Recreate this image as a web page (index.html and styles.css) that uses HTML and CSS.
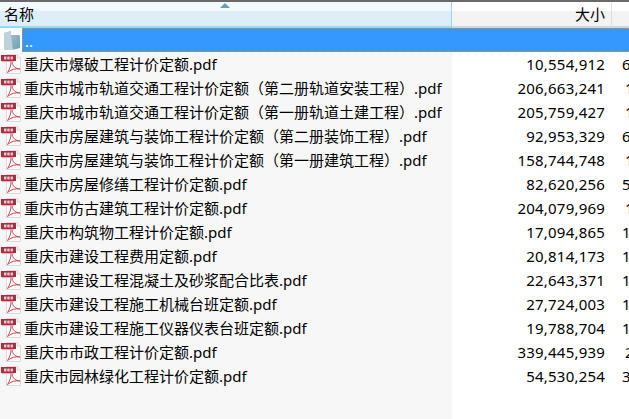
FILE: index.html
```html
<!DOCTYPE html>
<html lang="zh">
<head>
<meta charset="utf-8">
<title>文件列表</title>
<link rel="stylesheet" href="styles.css">
</head>
<body>
<svg class="defs" width="0" height="0" aria-hidden="true">
  <defs>
    <linearGradient id="fold" x1="0" y1="0" x2="1" y2="1">
      <stop offset="0" stop-color="#a9cbd8"/>
      <stop offset="1" stop-color="#6f9fb3"/>
    </linearGradient>
    <symbol id="pdf" viewBox="0 0 22 22">
      <path d="M6.5 1.5H17L20.5 5V20.5H6.5Z" fill="#fdfdfd" stroke="#dadada"/>
      <path d="M17 1.5V5H20.5" fill="#f0f0f0" stroke="#dadada"/>
      <rect x="1" y="2" width="15" height="6" fill="#ab2c40"/>
      <rect x="2" y="8" width="12" height="1" fill="#e0b0b8"/>
      <rect x="4" y="3.5" width="2.4" height="3" fill="#e8c6cc"/>
      <rect x="7.3" y="3.5" width="2.4" height="3" fill="#e8c6cc"/>
      <rect x="10.6" y="3.5" width="2.4" height="3" fill="#e8c6cc"/>
      <path d="M12 9C12.5 12.5 15 15.5 20 16C15.5 15.2 11 16.5 7.5 19.5C9.5 16.5 11 13 11 9" fill="none" stroke="#d2454e" stroke-width="1"/>
    </symbol>
  </defs>
</svg>
<div class="list">
  <div class="header">
    <div class="head-name"><span class="sort"></span><span>名称</span></div>
    <div class="head-size">大小</div>
    <div class="head-rest"></div>
  </div>
  <div class="row up">
    <svg class="folder" viewBox="0 0 18 21" width="18" height="21" aria-hidden="true">
      <path d="M1 3L8 1V5H16C17 5 17 6 17 7V18L9 20H3C2 20 1 19 1 18Z" fill="url(#fold)"/>
      <path d="M8 5L10 20H3C2 20 1 19 1 18V3L8 1Z" fill="#bcd3dc"/>
    </svg>
    <div class="up-label">..</div>
  </div>
  <div class="row"><svg class="icon"><use href="#pdf"/></svg><div class="name">重庆市爆破工程计价定额.pdf</div><div class="size">10,554,912</div><div class="rest">6</div></div>
  <div class="row"><svg class="icon"><use href="#pdf"/></svg><div class="name">重庆市城市轨道交通工程计价定额<span class="paren" lang="zh-Hant">（</span>第二册轨道安装工程<span class="paren" lang="zh-Hant">）</span>.pdf</div><div class="size">206,663,241</div><div class="rest in">1</div></div>
  <div class="row"><svg class="icon"><use href="#pdf"/></svg><div class="name">重庆市城市轨道交通工程计价定额<span class="paren" lang="zh-Hant">（</span>第一册轨道土建工程<span class="paren" lang="zh-Hant">）</span>.pdf</div><div class="size">205,759,427</div><div class="rest in">1</div></div>
  <div class="row"><svg class="icon"><use href="#pdf"/></svg><div class="name">重庆市房屋建筑与装饰工程计价定额<span class="paren" lang="zh-Hant">（</span>第二册装饰工程<span class="paren" lang="zh-Hant">）</span>.pdf</div><div class="size">92,953,329</div><div class="rest">6</div></div>
  <div class="row"><svg class="icon"><use href="#pdf"/></svg><div class="name">重庆市房屋建筑与装饰工程计价定额<span class="paren" lang="zh-Hant">（</span>第一册建筑工程<span class="paren" lang="zh-Hant">）</span>.pdf</div><div class="size">158,744,748</div><div class="rest in">1</div></div>
  <div class="row"><svg class="icon"><use href="#pdf"/></svg><div class="name">重庆市房屋修缮工程计价定额.pdf</div><div class="size">82,620,256</div><div class="rest">5</div></div>
  <div class="row"><svg class="icon"><use href="#pdf"/></svg><div class="name">重庆市仿古建筑工程计价定额.pdf</div><div class="size">204,079,969</div><div class="rest in">1</div></div>
  <div class="row"><svg class="icon"><use href="#pdf"/></svg><div class="name">重庆市构筑物工程计价定额.pdf</div><div class="size">17,094,865</div><div class="rest">1</div></div>
  <div class="row"><svg class="icon"><use href="#pdf"/></svg><div class="name">重庆市建设工程费用定额.pdf</div><div class="size">20,814,173</div><div class="rest">1</div></div>
  <div class="row"><svg class="icon"><use href="#pdf"/></svg><div class="name">重庆市建设工程混凝土及砂浆配合比表.pdf</div><div class="size">22,643,371</div><div class="rest">1</div></div>
  <div class="row"><svg class="icon"><use href="#pdf"/></svg><div class="name">重庆市建设工程施工机械台班定额.pdf</div><div class="size">27,724,003</div><div class="rest">1</div></div>
  <div class="row"><svg class="icon"><use href="#pdf"/></svg><div class="name">重庆市建设工程施工仪器仪表台班定额.pdf</div><div class="size">19,788,704</div><div class="rest">1</div></div>
  <div class="row"><svg class="icon"><use href="#pdf"/></svg><div class="name">重庆市市政工程计价定额.pdf</div><div class="size">339,445,939</div><div class="rest in">2</div></div>
  <div class="row"><svg class="icon"><use href="#pdf"/></svg><div class="name">重庆市园林绿化工程计价定额.pdf</div><div class="size">54,530,254</div><div class="rest">3</div></div>
</div>
</body>
</html>
```

FILE: styles.css
```css
html, body {
  margin: 0;
  height: 100%;
  overflow: hidden;
  background: #fff;
}
.defs { position: absolute; }
.list {
  width: 629px;
  height: 419px;
  overflow: hidden;
  color: #000;
  font: 15px/22px "Noto Sans", "Noto Sans CJK SC", sans-serif;
  background: linear-gradient(to right, #f7f7f7 452px, #fff 452px);
}
.header {
  display: flex;
  height: 28px;
  box-sizing: border-box;
  border-top: 2px solid #6a6a6a;
  background: #fff;
}
.head-name {
  position: relative;
  box-sizing: border-box;
  width: 452px;
  height: 26px;
  padding-left: 4px;
  line-height: 25px;
  border-right: 1px solid #96d6f0;
  border-bottom: 2px solid #8fdcf7;
  background: linear-gradient(to bottom, #f3fafe 0, #f3fafe 9px, #deeef8 9px, #deeef8 100%);
}
.sort {
  position: absolute;
  left: 220px;
  top: 1px;
  width: 0;
  height: 0;
  border-left: 5px solid transparent;
  border-right: 5px solid transparent;
  border-bottom: 5px solid #6d9cb5;
}
.head-size {
  box-sizing: border-box;
  width: 160px;
  height: 26px;
  padding-right: 6px;
  text-align: right;
  line-height: 25px;
  border-right: 1px solid #dedede;
  border-bottom: 2px solid #d6d6d6;
  background: linear-gradient(to bottom, #fff 0, #fff 9px, #f3f3f3 9px, #f3f3f3 100%);
}
.head-rest {
  flex: 1;
  height: 26px;
  box-sizing: border-box;
  border-bottom: 2px solid #d6d6d6;
  background: linear-gradient(to bottom, #fff 0, #fff 9px, #f3f3f3 9px, #f3f3f3 100%);
}
.row {
  display: flex;
  align-items: center;
  height: 24px;
}
.up {
  background: linear-gradient(to right, #fff 22px, #39f 22px);
}
.folder {
  flex: none;
  width: 18px;
  height: 21px;
  margin-left: 3px;
  margin-right: 1px;
}
.up-label {
  flex: 1;
  height: 24px;
  box-sizing: border-box;
  padding-left: 2px;
  color: #fff;
  line-height: 24px;
  border: 1px dotted #e8872a;
  border-right: 0;
}
.icon {
  flex: none;
  width: 22px;
  height: 22px;
  margin-right: 2px;
}
.name, .size, .rest {
  flex: none;
  white-space: nowrap;
}
.name {
  width: 428px;
  overflow: hidden;
}
.paren {
  font-family: "Noto Sans CJK TC", sans-serif;
}
.size {
  width: 153px;
  letter-spacing: 0.2px;
  text-align: right;
}
.rest {
  width: 10px;
  padding-left: 17px;
}
.rest.in {
  width: 7px;
  padding-left: 20px;
}
```
